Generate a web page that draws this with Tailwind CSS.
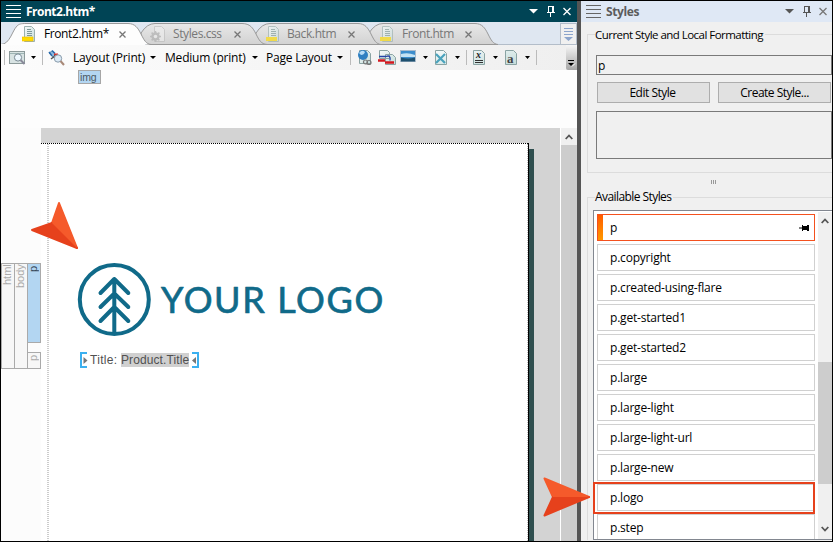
<!DOCTYPE html>
<html lang="en">
<head>
<meta charset="utf-8">
<title>Front2.htm</title>
<script src="https://cdn.jsdelivr.net/npm/@tailwindcss/browser@4"></script>
</head>
<body class="w-[833px] h-[542px] overflow-hidden bg-black">
<div class="relative w-[833px] h-[542px] overflow-hidden border border-black flex bg-[#f0f0f0] text-[12px] leading-4 text-black whitespace-nowrap font-['Open_Sans','Noto_Sans',sans-serif] tracking-[-0.2px]">

  <!-- Editor -->
  <main class="w-[576px] shrink-0 flex flex-col bg-[#fdfdfd]">
    <header class="h-[21px] shrink-0 bg-[#004455] text-white flex items-center pl-[5px]">
      <svg class="w-[15px] h-[13px]" viewBox="0 0 15 13" stroke="#fff" shape-rendering="crispEdges"><path d="M0 .5h15M0 4.5h15M0 8.500h15M0 12.500h15"/></svg>
      <b class="ml-[5px] w-[70px] tracking-[-0.5px]">Front2.htm*</b>
      <svg class="ml-auto mr-[3px] w-[48px] h-[13px]" viewBox="0 0 48 13" fill="none" stroke="#fff"><path d="M3 4h9L7.500 8.500z" fill="#fff" stroke="none"/><path d="M22.500 1v6M26.500 1v6M27.500 1v6M22 1.500h6M21 7.500h8M24.500 8v4" shape-rendering="crispEdges"/><path d="M37.500 3l7 7M44.500 3l-7 7" stroke-width="1.300"/></svg>
    </header>

    <nav class="h-[23px] shrink-0 relative bg-[#dfe7f1]">
      <svg class="absolute inset-0 w-[576px] h-[23px]" viewBox="0 0 576 23" stroke="#999">
        <defs><linearGradient id="tab" x2="0" y2="1"><stop stop-color="#e8e8e8"/><stop offset="1" stop-color="#d2d2d2"/></linearGradient>
        <linearGradient id="doc" x2="1" y2="1"><stop stop-color="#f5fafa"/><stop offset="1" stop-color="#c5dcda"/></linearGradient></defs>
        <path d="M0 22.500h576" stroke="#b3bdc9"/>
        <path d="M370 22.500Q377 21 368 11Q374 1.500 382 1.500H474C481 1.500 484 6 487 12C490 18 492 22 497 22.500z" fill="url(#tab)"/>
        <path d="M257 22.500Q252 19 255 11Q261 1.500 269 1.500H357C364 1.500 367 6 370 12C373 18 375 22 380 22.500z" fill="url(#tab)"/>
        <path d="M146 22.500Q140 19 140 11Q146 1.500 154 1.500H241C249 1.500 252 6 255 12C258 18 260 22 266 22.500z" fill="url(#tab)"/>
        <path d="M0 22.500C9 22 11 9 16 4C18 2 20 1.500 25 1.500H127C134 1.500 137 6 140 12C143 18 145 22 150 22.500" fill="#fdfdfd"/>
        <path d="M0 22.500H144" stroke="#fdfdfd"/>
      </svg>
      <div class="absolute inset-0 flex items-center pt-px text-[#777]">
        <svg class="ml-[21px] w-[13px] h-[17px]" viewBox="0 0 13 17"><path d="M2.500.5h7l3 3v12h-10z" fill="url(#doc)" stroke="#9bb0ae"/><path d="M5 3.500h4M5 5.500h5M5 7.500h5M5 9.500h5" stroke="#7f9a98"/><path d="M0 11h11v4H0z" fill="#ffdc00" stroke="#eebd00" stroke-width=".6"/></svg>
        <span class="ml-[9px] w-[64px] text-black tracking-[-0.4px]">Front2.htm*</span>
        <svg class="ml-[11px] w-[7px] h-[7px]" viewBox="0 0 7 7" stroke="#777" stroke-width="1.300"><path d="M.5.5l6 6M6.500.5l-6 6"/></svg>
        <svg class="ml-[24px] w-[15px] h-[17px] opacity-60" viewBox="0 0 15 17"><path d="M4.500.5h7l3 3v12h-10z" fill="#eee" stroke="#bbb"/><circle cx="5.500" cy="10.500" r="3" fill="none" stroke="#aaa" stroke-width="2.400"/><path d="M5.500 5v11M0 10.500h11M1.600 6.600l7.800 7.800M9.400 6.600l-7.800 7.800" stroke="#aaa" stroke-width="1.500"/><circle cx="5.500" cy="10.500" r="1.800" fill="#eee"/></svg>
        <span class="ml-[8px] w-[49px] tracking-[-0.4px]">Styles.css</span>
        <svg class="ml-[12px] w-[7px] h-[7px]" viewBox="0 0 7 7" stroke="#777" stroke-width="1.300"><path d="M.5.5l6 6M6.500.5l-6 6"/></svg>
        <svg class="ml-[25px] w-[13px] h-[17px] opacity-65" viewBox="0 0 13 17"><path d="M2.500.5h7l3 3v12h-10z" fill="url(#doc)" stroke="#9bb0ae"/><path d="M5 3.500h4M5 5.500h5M5 7.500h5M5 9.500h5" stroke="#7f9a98"/><path d="M0 11h11v4H0z" fill="#ffdc00"/></svg>
        <span class="ml-[8px] w-[49px] tracking-[-0.4px]">Back.htm</span>
        <svg class="ml-[12px] w-[7px] h-[7px]" viewBox="0 0 7 7" stroke="#777" stroke-width="1.300"><path d="M.5.5l6 6M6.500.5l-6 6"/></svg>
        <svg class="ml-[25px] w-[13px] h-[17px] opacity-65" viewBox="0 0 13 17"><path d="M2.500.5h7l3 3v12h-10z" fill="url(#doc)" stroke="#9bb0ae"/><path d="M5 3.500h4M5 5.500h5M5 7.500h5M5 9.500h5" stroke="#7f9a98"/><path d="M0 11h11v4H0z" fill="#ffdc00"/></svg>
        <span class="ml-[9px] w-[52px] tracking-[-0.45px]">Front.htm</span>
        <svg class="ml-[11px] w-[7px] h-[7px]" viewBox="0 0 7 7" stroke="#777" stroke-width="1.300"><path d="M.5.5l6 6M6.500.5l-6 6"/></svg>
        <div class="ml-auto w-[17px] h-[22px] bg-[#f0f0f0] border border-[#b3bdc9] flex justify-center items-center">
          <svg class="w-[9px] h-[13px]" viewBox="0 0 9 13"><path d="M0 .5h9M0 3.500h9M0 6.500h9" stroke="#8ba4cc"/><path d="M0 9h9l-4.500 4z" fill="#8ba4cc"/></svg>
        </div>
      </div>
    </nav>

    <div class="h-[25px] shrink-0 flex items-center bg-linear-to-r from-[#fcfcfc] to-[#efefef]">
      <svg class="ml-[3px] w-[35px] h-[17px]" viewBox="0 0 35 17"><path d="M.5 1v15" stroke="#bbb"/><rect x="5.500" y="2.500" width="15" height="12" fill="#d8e3e3" stroke="#8c9a9a"/><path d="M6 4.500h14" stroke="#9db4b4"/><circle cx="14" cy="8.500" r="3.600" fill="#eef8ff" stroke="#7b8b94"/><path d="M16.500 11l4 4" stroke="#8a8a9a" stroke-width="2"/><path d="M27 7h5l-2.500 3z"/></svg>
      <i class="ml-[3px] w-px h-[15px] bg-[#bbb]"></i>
      <svg class="ml-[5px] w-[17px] h-[17px]" viewBox="0 0 17 17"><path d="M1 4l3-2 7 7-3 2z" fill="#8dbbe0" stroke="#4f7ca4" stroke-width=".8"/><path d="M1 3l3 4M4 1.500l3 3" stroke="#286aac" stroke-width="1.500"/><path d="M6 4.500h4v3H6z" fill="#de3029"/><path d="M3 10l5-4" stroke="#555" stroke-width="1.500"/><circle cx="10" cy="9.500" r="3.700" fill="#dceaf5" stroke="#879aaa"/><path d="M12.500 12l3.500 4" stroke="#a88978" stroke-width="2"/></svg>
      <span class="ml-[8px] w-[73px]">Layout (Print)</span>
      <svg class="ml-[4px] w-[6px] h-[3px]" viewBox="0 0 6 3"><path d="M0 0h6L3 3z"/></svg>
      <span class="ml-[9px] w-[81px]">Medium (print)</span>
      <svg class="ml-[6px] w-[6px] h-[3px]" viewBox="0 0 6 3"><path d="M0 0h6L3 3z"/></svg>
      <span class="ml-[8px] w-[66px]">Page Layout</span>
      <svg class="ml-[5px] w-[6px] h-[3px]" viewBox="0 0 6 3"><path d="M0 0h6L3 3z"/></svg>
      <i class="ml-[7px] w-px h-[15px] bg-[#bbb]"></i>
      <svg class="ml-[6px] w-[180px] h-[17px]" viewBox="0 0 180 17">
        <g stroke="#8aa3a3" fill="url(#doc)"><path d="M2.500 1.500h8l3 3v10h-11z"/><path d="M22.500 1.500h8l2 2v6h-10zM28.500 5.500h7l3 3v7h-10z"/><path d="M78.500 1.500h8l3 3v11h-11zM116.500 1.500h8l3 3v11h-11zM148.500 1.500h8l3 3v11h-11z"/></g>
        <circle cx="6" cy="6" r="5" fill="#2e7fc1"/><path d="M2 4q3-4 6-1q-1 3-4 3z" fill="#b5dcf7"/><g fill="none" stroke="#777" stroke-width="1.200"><circle cx="8.500" cy="13" r="2"/><circle cx="12" cy="13.500" r="2"/></g>
        <path d="M22 7.500h7q5-2 4 4" fill="none" stroke="#2545a5" stroke-width="1.300"/><path d="M21 11.500h7M28 13.500h9" stroke="#d3191f" stroke-width="2.500"/>
        <rect x="43.500" y="1.500" width="15" height="11" fill="#3c8dcc" stroke="#abc"/><path d="M44 5q7-2 14 1v2H44z" fill="#c4e2f3"/><path d="M44 8.500q7 2 14 0v4H44z" fill="#1e506f"/>
        <path d="M79 5l9 9M88 5l-9 9" stroke="#4aa3bd" stroke-width="2.200"/>
        <path d="M66 7h5l-2.500 3zM98 7h5l-2.500 3zM136 7h5l-2.500 3zM168 7h5l-2.500 3z"/>
        <path d="M109.500 1v15M179.500 1v15" stroke="#bbb"/>
        <text x="119" y="9" font-size="10" font-style="italic" font-weight="bold" font-family="Liberation Serif, serif" fill="#222">x</text><path d="M118 11.500h8M118 13.500h8" stroke="#333"/>
        <text x="150" y="14" font-size="13" font-weight="bold" font-family="Liberation Serif, serif" fill="#444">a</text>
      </svg>
      <div class="ml-auto self-stretch w-[11px] rounded-bl-[2px] bg-linear-to-b from-[#f6f6f6] to-[#a6a6a6]"><svg class="w-[11px] h-[25px]" viewBox="0 0 11 25"><path d="M2 15.500h6" stroke="#000"/><path d="M2 18h6l-3 3z"/><path d="M6 21.500l3-3" stroke="#fff"/></svg></div>
    </div>

    <div class="h-[58px] shrink-0 pl-[77px]">
      <span class="block w-[23px] h-[14px] border border-[#a6a6a6] bg-[#b3d6f2] pl-px text-[10.500px] leading-[12px] text-[#4b5963] font-['Liberation_Sans',sans-serif]">img</span>
    </div>

    <div class="flex-1 flex min-h-0 bg-[#d3d3d3]">
      <aside class="w-10 bg-[#fcfcfc] pt-[135px] flex shrink-0 text-[#aaa] text-[11px] tracking-normal font-['Liberation_Sans',sans-serif]">
        <div class="h-[106px] w-[14px] border border-[#aaa] bg-[#f7f7f7]"><span class="[writing-mode:vertical-rl] rotate-180 leading-[11px] h-[26px] text-right">html</span></div>
        <div class="h-[106px] w-[14px] -ml-px border border-[#aaa] bg-[#f7f7f7]"><span class="[writing-mode:vertical-rl] rotate-180 leading-[11px] h-[26px] text-right">body</span></div>
        <div class="h-[106px] w-[14px] -ml-px flex flex-col justify-between">
          <div class="h-[80px] border border-[#aaa] bg-[#b3d6f2] text-[#345]"><span class="[writing-mode:vertical-rl] rotate-180 leading-[11px] h-[10px] text-right">p</span></div>
          <div class="h-[17px] border border-[#aaa] bg-[#f7f7f7]"><span class="[writing-mode:vertical-rl] rotate-180 leading-[11px] h-[10px] text-right">p</span></div>
        </div>
      </aside>
      <div class="w-[519px] pt-[15px] flex">
        <section class="w-[488px] bg-white border-r border-black relative">
          <div class="h-px bg-[repeating-linear-gradient(90deg,#000_0_1px,#fff_1px_2px)]"></div>
          <div class="absolute left-[6px] top-px bottom-0 w-[2px] bg-[repeating-linear-gradient(180deg,#ccc_0_1px,#fff_1px_2px)]"></div>
          <div class="absolute right-0 top-px bottom-0 w-px bg-[repeating-linear-gradient(180deg,#bbb_0_1px,#fff_1px_2px)]"></div>
          <svg class="mt-[118px] ml-[36px] w-[310px] h-[76px]" viewBox="77 262 310 76" fill="none" stroke="#106a89" stroke-width="4" stroke-linecap="round" stroke-linejoin="round">
            <circle cx="114.300" cy="299.500" r="34.500"/>
            <path d="M114.300 279v54M100.500 293l13.800-14 14 14M100.500 307l13.800-13.500 14 13.500M100.500 321l13.800-14 14 14"/>
            <text x="161" y="312.500" textLength="222" lengthAdjust="spacing" font-size="36" font-family="Lato, sans-serif" fill="#106a89" stroke-width=".7">YOUR LOGO</text>
          </svg>
          <div class="ml-[39px] mt-[14px] w-[119px] h-[16px] flex items-center justify-between text-[12px] text-[#505050] tracking-normal font-['Liberation_Sans',sans-serif]">
            <svg class="w-[8px] h-[16px]" viewBox="0 0 8 16" fill="none"><path d="M7 1H1v14h6" stroke="#3cb0ef" stroke-width="2"/><path d="M3.500 5v7l4-3.500z" fill="#777"/></svg>
            <span class="w-[29px] tracking-[0.3px]">Title:</span>
            <span class="bg-[#d0d0d0] w-[68px] h-[14px] leading-[14px] tracking-[0.1px]">Product.Title</span>
            <svg class="w-[8px] h-[16px]" viewBox="0 0 8 16" fill="none"><path d="M1 1h6v14H1" stroke="#3cb0ef" stroke-width="2"/><path d="M5 5v7L1 8.500z" fill="#777"/></svg>
          </div>
        </section>
        <div class="mt-[6px] w-[5px] bg-[#2f4f4f]"></div>
      </div>
      <div class="w-[17px] border-l border-white flex flex-col">
        <div class="h-[17px] bg-[#f0f0f0] flex items-center justify-center"><svg class="w-[8px] h-[6px]" viewBox="0 0 8 6" fill="none" stroke="#555" stroke-width="1.800"><path d="M.7 5L4 1.500 7.300 5"/></svg></div>
        <div class="flex-1 bg-[#cdcdcd]"></div>
      </div>
    </div>
  </main>

  <div class="w-[4px] shrink-0 bg-[#555]"></div>

  <!-- Styles pane -->
  <aside class="w-[251px] shrink-0 flex flex-col">
    <header class="h-[21px] shrink-0 bg-[#dfe8f5] flex items-center pl-[5px] text-[#5c5c5c]">
      <svg class="w-[15px] h-[13px]" viewBox="0 0 15 13" stroke="#666" shape-rendering="crispEdges"><path d="M0 .5h15M0 4.500h15M0 8.500h15M0 12.500h15"/></svg>
      <b class="ml-[5px] tracking-[-0.4px]">Styles</b>
      <svg class="ml-auto mr-[2px] w-[48px] h-[13px]" viewBox="0 0 48 13" fill="none" stroke="#555"><path d="M3 4h9L7.500 8.500z" fill="#555" stroke="none"/><path d="M22.500 1v6M26.500 1v6M27.500 1v6M22 1.500h6M21 7.500h8M24.500 8v4" shape-rendering="crispEdges"/><path d="M37.500 3l7 7M44.500 3l-7 7" stroke="#777" stroke-width="1.300"/></svg>
    </header>

    <section class="ml-[6px] mt-[12px] h-[139px] shrink-0 border border-r-0 border-[#dcdcdc] pl-[8px]">
      <h2 class="-mt-[8px] -ml-px w-[170px] h-4 bg-[#f0f0f0] text-[11.500px] tracking-[-0.53px]">Current Style and Local Formatting</h2>
      <div class="mt-[12px] w-[236px] h-[20px] border border-[#7a7a7a] pl-px leading-[19px]">p</div>
      <div class="mt-[7px] pl-px flex gap-[8px] text-center leading-[20px] tracking-[-0.5px]">
        <div class="w-[113px] h-[21px] bg-[#e1e1e1] border border-[#adadad] pr-[2px]">Edit Style</div>
        <div class="w-[113px] h-[21px] bg-[#e1e1e1] border border-[#adadad]">Create Style...</div>
      </div>
      <div class="mt-[8px] w-[236px] h-[48px] border border-[#7a7a7a]"></div>
    </section>

    <div class="h-[24px] shrink-0 pt-[7px] pl-[130px] flex gap-px"><i class="w-px h-[4px] bg-[#999]"></i><i class="w-px h-[4px] bg-[#999]"></i><i class="w-px h-[4px] bg-[#999]"></i></div>

    <section class="ml-[6px] h-[343px] shrink-0 border-l border-t border-[#dcdcdc] pl-[5px]">
      <h2 class="-mt-[9px] ml-[2px] w-[78px] h-4 bg-[#f0f0f0] tracking-[-0.57px]">Available Styles</h2>
      <div class="mt-[5px] h-[330px] border border-r-0 border-[#828790] bg-white pl-[3px] pt-[3px] flex justify-between overflow-hidden">
        <ul class="w-[218px] flex flex-col gap-[3px] leading-[25px]">
          <li class="h-[27px] shrink-0 border border-[#f4511e] flex items-center"><i class="w-[5px] h-full bg-linear-to-b from-[#ff5a00] to-[#ff9800]"></i><span class="ml-[7px]">p</span><svg class="ml-auto mr-[5px] w-[10px] h-[8px]" viewBox="0 0 10 8"><path d="M0 4h4" stroke="#000"/><path d="M3 1h1v1h4V1h2v6H8V6H4v1H3z"/></svg></li>
          <li class="h-[27px] shrink-0 border border-[#d0d0d0] pl-[12px]">p.copyright</li>
          <li class="h-[27px] shrink-0 border border-[#d0d0d0] pl-[12px]">p.created-using-flare</li>
          <li class="h-[27px] shrink-0 border border-[#d0d0d0] pl-[12px]">p.get-started1</li>
          <li class="h-[27px] shrink-0 border border-[#d0d0d0] pl-[12px]">p.get-started2</li>
          <li class="h-[27px] shrink-0 border border-[#d0d0d0] pl-[12px]">p.large</li>
          <li class="h-[27px] shrink-0 border border-[#d0d0d0] pl-[12px]">p.large-light</li>
          <li class="h-[27px] shrink-0 border border-[#d0d0d0] pl-[12px]">p.large-light-url</li>
          <li class="h-[27px] shrink-0 border border-[#d0d0d0] pl-[12px]">p.large-new</li>
          <li class="h-[27px] shrink-0 border border-[#d0d0d0] pl-[12px]">p.logo</li>
          <li class="h-[27px] shrink-0 border border-[#d0d0d0] pl-[12px]">p.step</li>
        </ul>
        <div class="w-[14px] -mt-[2px] bg-[#f0f0f0] flex flex-col items-center">
          <svg class="mt-[6px] w-[8px] h-[6px]" viewBox="0 0 8 6" fill="none" stroke="#555" stroke-width="1.800"><path d="M.7 5L4 1.500 7.300 5"/></svg>
          <div class="mt-[138px] w-full h-[122px] bg-[#cdcdcd]"></div>
          <svg class="mt-[42px] w-[8px] h-[6px]" viewBox="0 0 8 6" fill="none" stroke="#555" stroke-width="1.800"><path d="M.7 1L4 4.500 7.300 1"/></svg>
        </div>
      </div>
    </section>
  </aside>

  <!-- Callouts -->
  <div class="absolute left-[592px] top-[481px] w-[222px] h-[32px] border-2 border-[#e6411c]"></div>
  <svg class="absolute left-[541px] top-[475px] w-[49px] h-[43px]" viewBox="542 476 49 43" stroke-linejoin="round"><path d="M544.500 478.500L589 497H553z" fill="#f55a2b" stroke="#f55a2b" stroke-width="2"/><path d="M544.500 515.500L589 497H553z" fill="#e6411c" stroke="#e6411c" stroke-width="2"/><path d="M553 497l-8.500-18.500L589 497z" fill="#f55a2b"/></svg>
  <svg class="absolute left-[29px] top-[199px] w-[51px] h-[51px]" viewBox="30 200 51 51" stroke-linejoin="round"><path d="M59 203L77 248 52 223z" fill="#f55a2b" stroke="#f55a2b" stroke-width="2"/><path d="M32 230L77 248 52 223z" fill="#e6411c" stroke="#e6411c" stroke-width="2"/><path d="M59 203L77 248 52 223z" fill="#f55a2b"/></svg>
</div>
</body>
</html>
